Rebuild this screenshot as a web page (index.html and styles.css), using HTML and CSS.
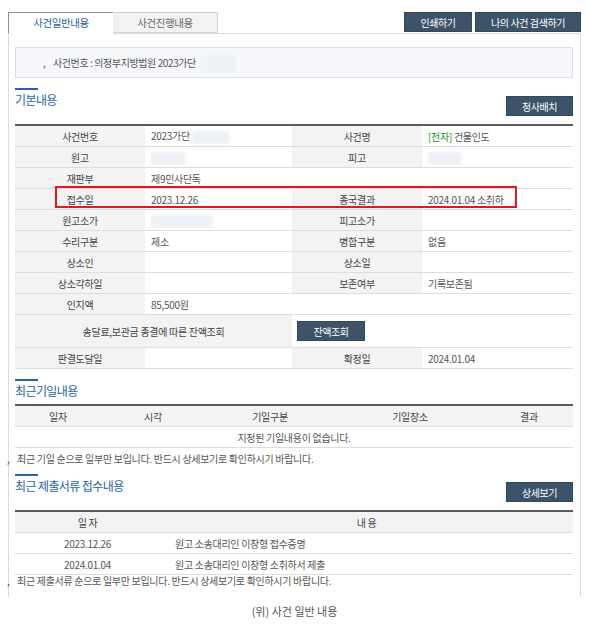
FILE: index.html
```html
<!DOCTYPE html>
<html>
<head>
    <title>사건일반내용</title>
    <link rel="stylesheet" href="styles.css">
</head>
<body>
    <div class="wrap">
        <div class="top">
            <ul class="tabs">
                <li class="tab on">사건일반내용</li>
                <li class="tab">사건진행내용</li>
            </ul>
            <div class="top-btns">
                <button class="btn btn-print">인쇄하기</button>
                <button class="btn btn-search">나의 사건 검색하기</button>
            </div>
        </div>

        <div class="panel">
            <div class="infobox"><span class="dot">,</span>사건번호 : 의정부지방법원 2023가단 <span class="blur b-info"></span></div>

            <div class="sec-head">
                <h3 class="sec-title">기본내용</h3>
                <button class="btn btn-sm">청사배치</button>
            </div>
            <div class="tbl-wrap">
                <table class="tbl tbl-basic">
                    <colgroup>
                        <col style="width:130px"><col style="width:147px"><col style="width:130px"><col style="width:151px">
                    </colgroup>
                    <tr>
                        <th>사건번호</th><td>2023가단 <span class="blur b-no"></span></td>
                        <th>사건명</th><td><span class="elec">[전자]</span> 건물인도</td>
                    </tr>
                    <tr>
                        <th>원고</th><td><span class="blur b-name"></span></td>
                        <th>피고</th><td><span class="blur b-name"></span></td>
                    </tr>
                    <tr>
                        <th>재판부</th><td colspan="3">제9민사단독</td>
                    </tr>
                    <tr>
                        <th>접수일</th><td>2023.12.26</td>
                        <th>종국결과</th><td>2024.01.04 소취하</td>
                    </tr>
                    <tr>
                        <th>원고소가</th><td><span class="blur b-price"></span></td>
                        <th>피고소가</th><td></td>
                    </tr>
                    <tr>
                        <th>수리구분</th><td>제소</td>
                        <th>병합구분</th><td>없음</td>
                    </tr>
                    <tr>
                        <th>상소인</th><td></td>
                        <th>상소일</th><td></td>
                    </tr>
                    <tr>
                        <th>상소각하일</th><td></td>
                        <th>보존여부</th><td>기록보존됨</td>
                    </tr>
                    <tr>
                        <th>인지액</th><td colspan="3">85,500원</td>
                    </tr>
                    <tr class="tall">
                        <th colspan="2">송달료,보관금 종결에 따른 잔액조회</th>
                        <td colspan="2" class="btn-cell"><button class="btn btn-bal">잔액조회</button></td>
                    </tr>
                    <tr>
                        <th>판결도달일</th><td></td>
                        <th>확정일</th><td>2024.01.04</td>
                    </tr>
                </table>
                <div class="mark"></div>
            </div>

            <div class="sec-head sec-plain">
                <h3 class="sec-title">최근기일내용</h3>
            </div>
            <table class="tbl tbl-list">
                <colgroup>
                    <col style="width:86px"><col style="width:104px"><col style="width:130px"><col style="width:150px"><col style="width:88px">
                </colgroup>
                <tr class="head">
                    <th>일자</th><th>시각</th><th>기일구분</th><th>기일장소</th><th>결과</th>
                </tr>
                <tr>
                    <td colspan="5" class="empty">지정된 기일내용이 없습니다.</td>
                </tr>
            </table>
            <p class="note note-first"><span class="dot">,</span>최근 기일 순으로 일부만 보입니다. 반드시 상세보기로 확인하시기 바랍니다.</p>

            <div class="sec-head sec-last">
                <h3 class="sec-title">최근 제출서류 접수내용</h3>
                <button class="btn btn-sm">상세보기</button>
            </div>
            <table class="tbl tbl-list tbl-docs">
                <colgroup>
                    <col style="width:145px"><col>
                </colgroup>
                <tr class="head">
                    <th>일 자</th><th>내 용</th>
                </tr>
                <tr>
                    <td class="c">2023.12.26</td><td class="txt">원고 소송대리인 이창형 접수증명</td>
                </tr>
                <tr>
                    <td class="c">2024.01.04</td><td class="txt">원고 소송대리인 이창형 소취하서 제출</td>
                </tr>
            </table>
            <p class="note note-last"><span class="dot">,</span>최근 제출서류 순으로 일부만 보입니다. 반드시 상세보기로 확인하시기 바랍니다.</p>
        </div>

        <p class="caption">(위) 사건 일반 내용</p>
    </div>
</body>
</html>
```

FILE: styles.css
```css
body { margin: 0; background: #fff; font-family: "Noto Sans CJK KR", "Noto Sans", sans-serif; color: #444; }
.wrap { width: 573px; margin: 0 8px; padding-top: 12px; }
button { font-family: inherit; }

.top { display: flex; justify-content: space-between; align-items: flex-start; height: 21px; }
.tabs { display: flex; list-style: none; margin: 0; padding: 0; position: relative; z-index: 1; }
.tab { width: 105px; height: 21px; box-sizing: border-box; text-align: center; font-size: 10.5px; line-height: 20px; letter-spacing: -0.4px; color: #666; background: #f2f2f2; border: 1px solid #d4d4d4; border-left: none; }
.tab.on { width: 105px; background: #fff; color: #2d5f9e; border: 1px solid #7f95ae; border-right: none; border-bottom: 1px solid #fff; height: 22px; }
.top-btns { display: flex; gap: 3px; }
.btn { background: #3d536a; color: #fff; border: 1px solid #33475c; font-size: 10px; letter-spacing: -0.4px; height: 20px; padding: 0; cursor: pointer; }
.btn-print { width: 68px; }
.btn-search { width: 106px; }

.panel { border: 1px solid #dcdcdc; border-bottom: none; padding: 0 7px 10px 6px; }
.infobox { margin-top: 13px; height: 31px; box-sizing: border-box; background: #f6f8fb; border: 1px solid #dde0e5; padding-left: 27px; font-size: 10px; line-height: 29px; letter-spacing: -0.4px; color: #555; }
.dot { display: inline-block; width: 6px; margin-right: 4px; }
.blur { display: inline-block; vertical-align: middle; background: #eef1f6; filter: blur(1.5px); }
.b-info { width: 36px; height: 16px; margin-left: 2px; }
.b-no { width: 38px; height: 13px; }
.b-name { width: 34px; height: 13px; }
.b-price { width: 62px; height: 13px; }

.sec-head { display: flex; justify-content: space-between; align-items: flex-start; margin-top: 10px; margin-bottom: 8px; }
.sec-title { margin: 0; font-size: 12px; font-weight: normal; line-height: 16px; letter-spacing: -0.6px; color: #2a63a5; }
.sec-title::before { content: ''; display: block; width: 23px; height: 2px; background: #2a63a5; margin-bottom: 2px; }
.btn-sm { width: 67px; margin-top: 8px; }
.sec-plain { margin-top: 10px; margin-bottom: 5px; }
.sec-last { margin-top: 8px; }

.tbl { width: 100%; border-collapse: separate; border-spacing: 0; table-layout: fixed; border-top: 2px solid #5b5b5b; font-size: 10px; letter-spacing: -0.3px; }
.tbl th, .tbl td { height: 20px; padding: 0; border-bottom: 1px solid #dedede; font-weight: normal; }
.tbl-basic th { background: #f3f3f3; color: #444; text-align: center; }
.tbl-basic td { background: #fff; color: #555; padding-left: 6px; }
.tbl-basic .tall th, .tbl-basic .tall td { height: 32px; }
.tbl-basic .btn-cell { padding-left: 5px; }
.btn-bal { width: 68px; }
.elec { color: #2b8a2b; }

.tbl-wrap { position: relative; }
.mark { position: absolute; top: 62px; left: 40px; width: 462px; height: 22px; box-sizing: border-box; border: 2px solid #e5161c; }

.tbl-list .head th { background: #f3f3f3; color: #444; text-align: center; }
.tbl-list td { color: #555; }
.tbl-list .empty { text-align: center; }
.tbl-docs .c { text-align: center; }
.tbl-docs .txt { padding-left: 15px; }

.note { margin: 0 0 0 -8px; font-size: 10px; letter-spacing: -0.3px; color: #555; }
.note-first { margin-top: 4px; line-height: 14px; }
.note-last { margin-top: 0; line-height: 12px; }

.caption { margin: 6px 0 0; text-align: center; font-size: 11px; line-height: 16px; color: #555; }
```
